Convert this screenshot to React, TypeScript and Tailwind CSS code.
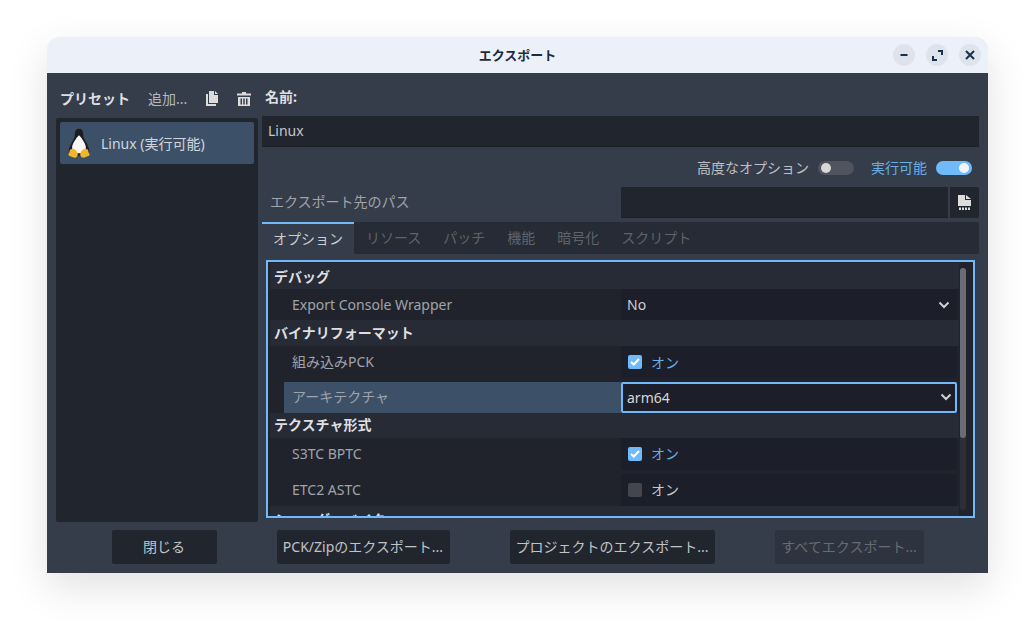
const font = { fontFamily: '"Noto Sans", "Noto Sans CJK JP", sans-serif' };

function Penguin() {
  return (
    <svg width="22" height="31" viewBox="0 0 24 32">
      <path d="M12 0c-3.500 0-4.600 3-4.600 6.500 0 3-1.400 5-3.400 8.500C2 18.500.8 22 .8 25.500L5 29h14l4.200-3.500c0-3.500-1.200-7-3.200-10.500-2-3.500-3.400-5.500-3.400-8.500C16.600 3 15.500 0 12 0z" fill="#1d1d1f" />
      <path d="M12 7l-2.800 3C8.400 12 4.500 16 4.500 20.500c0 3 2 6 7.500 6s7.500-3 7.500-6c0-4.500-3.900-8.500-4.700-10.500z" fill="#f7f7f7" />
      <path d="M5.500 21.500 8 23c1.500 1 3 3 2.600 5.500-.3 2-2.400 3.500-4.600 2.800L1.800 29.700C.5 29.200 0 28.300.8 27.300c.8-1.300.9-3 1.200-4 .3-1 2-1 3.500-1.800z" fill="#f3b52b" />
      <path d="M18.500 21.500 16 23c-1.500 1-3 3-2.600 5.500.3 2 2.400 3.500 4.600 2.800l4.200-1.600c1.300-.5 1.800-1.400 1-2.400-.8-1.300-.9-3-1.200-4-.3-1-2-1-3.500-1.800z" fill="#f3b52b" />
    </svg>
  );
}

function FileStack() {
  return (
    <svg width="13" height="15" viewBox="0 0 13 15" fill="#dcdcdc">
      <path d="M3 0h5v4h4v8H3z" />
      <path d="M9 0l3 3H9z" />
      <path d="M0 3h2v10h8v2H0z" />
    </svg>
  );
}

function Trash() {
  return (
    <svg width="14" height="14" viewBox="0 0 14 14" fill="#dcdcdc">
      <path d="M5 0h4v1.500h5v2H0v-2h5z" />
      <path d="M1 5h12v9H1zM3.500 6.500v6H5v-6zM6.250 6.500v6h1.500v-6zM9 6.500v6h1.500v-6z" fillRule="evenodd" />
    </svg>
  );
}

function FileDots() {
  return (
    <svg width="13" height="15" viewBox="0 0 13 15" fill="#dcdcdc">
      <path d="M0 0h7v5h6v6H0z" />
      <path d="M8 0l5 4H8z" />
      <path d="M1 12.500h2V15H1zM4 12.500h2V15H4zM7 12.500h2V15H7zM10 12.500h2V15h-2z" />
    </svg>
  );
}

function Chevron() {
  return (
    <svg width="12" height="8" viewBox="0 0 12 8" fill="none" stroke="#d0d0d0" strokeWidth="2">
      <path d="M1.500 1.500 6 6l4.500-4.500" />
    </svg>
  );
}

function Checkbox({ checked }: { checked: boolean }) {
  return (
    <span className="flex items-center gap-[9px] pl-[1px]">
      {checked ? (
        <span className="flex h-[14px] w-[14px] items-center justify-center rounded-[2px] bg-[#70bafa]">
          <svg width="10" height="8" viewBox="0 0 10 8" fill="none" stroke="#ffffff" strokeWidth="2">
            <path d="M1 4l2.800 2.500L9 1" />
          </svg>
        </span>
      ) : (
        <span className="h-[14px] w-[14px] rounded-[2px] bg-[#43464f]" />
      )}
      <span className={checked ? "text-[#66aee8]" : "text-[#c8c9cc]"}>オン</span>
    </span>
  );
}

function Toggle({ on }: { on: boolean }) {
  return on ? (
    <span className="flex h-[14px] w-[36px] items-center justify-end rounded-full bg-[#70bafa] pr-[3px]">
      <span className="h-[10px] w-[10px] rounded-full bg-[#f0f4f8]" />
    </span>
  ) : (
    <span className="flex h-[14px] w-[36px] items-center rounded-full bg-[#50545e] pl-[3px]">
      <span className="h-[10px] w-[10px] rounded-full bg-[#d8d8d8]" />
    </span>
  );
}

function SectionHead({ label, className }: { label: string; className: string }) {
  return (
    <div className={`ml-[2px] mr-[1px] flex items-center bg-[#272b35] pl-[4px] text-[14px] font-bold text-[#dedfe1] ${className}`}>
      {label}
    </div>
  );
}

function Row({ label, labelClass = "", valueClass = "", children }: { label: string; labelClass?: string; valueClass?: string; children: React.ReactNode }) {
  return (
    <div className="ml-[16px] flex h-[32px]">
      <div className={`flex w-[337px] items-center pl-[8px] text-[#a0a3a9] ${labelClass}`}>{label}</div>
      <div className={`flex w-[336px] items-center bg-[#1c1f29] px-[6px] text-[#cfcfd1] ${valueClass}`}>{children}</div>
    </div>
  );
}

function WindowButton({ children }: { children: React.ReactNode }) {
  return (
    <span className="flex h-[22px] w-[22px] items-center justify-center rounded-full bg-[#dfe3ec]">{children}</span>
  );
}

export default function App() {
  const tabs = ["リソース", "パッチ", "機能", "暗号化", "スクリプト"];

  return (
    <div className="h-[630px] w-[1035px] overflow-hidden bg-white pl-[47px] pt-[37px] text-[14px]" style={font}>
      <div className="flex h-[536px] w-[941px] flex-col overflow-hidden rounded-t-[12px] shadow-[0_14px_40px_rgba(0,0,0,0.12)]">
        <header className="relative flex h-[36px] shrink-0 items-center justify-center bg-[#ecf0f9] pt-[1px]">
          <span className="text-[13px] font-semibold text-[#1c2b3f]">エクスポート</span>
          <div className="absolute right-[7px] top-[7px] flex gap-[11px]">
            <WindowButton>
              <svg width="10" height="10" viewBox="0 0 10 10" fill="#17324f"><path d="M1.500 4h7v2h-7z" /></svg>
            </WindowButton>
            <WindowButton>
              <svg width="11" height="11" viewBox="0 0 11 11" fill="#17324f">
                <path d="M6 0h5v5H9V2H6zM0 6h2v3h3v2H0z" />
              </svg>
            </WindowButton>
            <WindowButton>
              <svg width="10" height="10" viewBox="0 0 10 10" stroke="#17324f" strokeWidth="2"><path d="M1 1l8 8M9 1 1 9" /></svg>
            </WindowButton>
          </div>
        </header>

        <div className="flex min-h-0 flex-1 flex-col bg-[#363d4a] px-[9px]">
          <div className="flex h-[457px] shrink-0 gap-[4px] pt-[13px]">
            <aside className="flex w-[202px] shrink-0 flex-col">
              <div className="flex h-[32px] items-end whitespace-nowrap pb-[9px] pl-[4px]">
                <span className="font-bold text-[#dedfe1]">プリセット</span>
                <span className="ml-[18px] w-[39px] text-[#b4b7bd]">追加...</span>
                <span className="mb-[3px] ml-[19px]"><FileStack /></span>
                <span className="mb-[3px] ml-[18px]"><Trash /></span>
              </div>
              <div className="mb-[1px] h-[404px] rounded-[2px] bg-[#21262e] p-[4px]">
                <div className="flex h-[42px] items-center gap-[11px] rounded-[2px] bg-[#3c5168] pl-[8px] text-[#d2d6dc]">
                  <Penguin />
                  <span>Linux (実行可能)</span>
                </div>
              </div>
            </aside>

            <main className="flex w-[717px] shrink-0 flex-col">
              <div className="flex h-[30px] items-end pb-[9px] pl-[3px] font-bold text-[#dedfe1]">名前:</div>
              <div className="flex h-[31px] items-center border-b border-[#1b1e25] bg-[#21262e] pb-[2px] pl-[6px] text-[#c2c5ca]">Linux</div>
              <div className="flex h-[40px] items-center justify-end gap-[9px] pr-[7px] pt-[1px]">
                <span className="text-[#bec0c4]">高度なオプション</span>
                <Toggle on={false} />
                <span className="ml-[8px] text-[#66aee8]">実行可能</span>
                <Toggle on />
              </div>
              <div className="flex h-[31px] items-center">
                <span className="w-[359px] pb-[2px] pl-[8px] text-[#a0a3a9]">エクスポート先のパス</span>
                <div className="h-full w-[327px] border-b border-[#1b1e25] bg-[#21262e]" />
                <div className="ml-[2px] flex h-full flex-1 items-center justify-center rounded-r-[2px] bg-[#21262e]">
                  <FileDots />
                </div>
              </div>

              <div className="mt-[4px] flex h-[32px] shrink-0 items-stretch rounded-[2px] bg-[#262b35]">
                <div className="flex w-[92px] items-center justify-center border-t-2 border-[#70bafa] bg-[#363d4a] pb-[2px] text-[#cacdd2]">オプション</div>
                <div className="flex items-center gap-[22px] pb-[1px] pl-[12px] text-[#5f636b]">
                  {tabs.map((tab) => (
                    <span key={tab}>{tab}</span>
                  ))}
                </div>
              </div>

              <div className="ml-[4px] mt-[6px] flex h-[258px] w-[709px] shrink-0 overflow-hidden border-2 border-[#70bafa] bg-[#20232c]">
                <div className="min-w-0 flex-1 overflow-hidden">
                  <div className="h-[1px]" />
                  <SectionHead label="デバッグ" className="h-[26px]" />
                  <div className="ml-[16px] flex h-[31px]">
                    <div className="flex w-[337px] items-center pl-[8px] text-[#a0a3a9]">Export Console Wrapper</div>
                    <div className="flex w-[336px] items-center justify-between bg-[#1c1f29] pl-[6px] pr-[7px] text-[#cfcfd1]">
                      <span>No</span>
                      <Chevron />
                    </div>
                  </div>
                  <SectionHead label="バイナリフォーマット" className="h-[26px] pb-[2px]" />
                  <Row label="組み込みPCK" labelClass="pb-[2px]">
                    <Checkbox checked />
                  </Row>
                  <div className="ml-[16px] mt-[4px] flex h-[31px]">
                    <div className="flex w-[337px] items-center bg-[#3c5168] pb-[2px] pl-[8px] text-[#a0a3a9]">アーキテクチャ</div>
                    <div className="flex w-[336px] items-center justify-between rounded-[2px] border-2 border-[#70bafa] bg-[#1c1f29] pb-[1px] pl-[4px] pr-[3px] text-[#d8d8d8]">
                      <span>arm64</span>
                      <Chevron />
                    </div>
                  </div>
                  <SectionHead label="テクスチャ形式" className="h-[25px] pb-[2px]" />
                  <Row label="S3TC BPTC" labelClass="pb-[2px]" valueClass="pb-[1px]">
                    <Checkbox checked />
                  </Row>
                  <div className="h-[4px]" />
                  <Row label="ETC2 ASTC" labelClass="pb-[2px]" valueClass="pb-[1px]">
                    <Checkbox checked={false} />
                  </Row>
                  <SectionHead label="シェーダーベイク" className="h-[26px]" />
                </div>
                <div className="mr-[7px] mt-[6px] flex h-[242px] w-[6px] shrink-0 flex-col rounded-full bg-[#2b2f38]">
                  <div className="h-[170px] w-full rounded-full bg-[#6a6d74]" />
                </div>
              </div>
            </main>
          </div>

          <footer className="flex flex-1 items-start justify-center gap-[60px]">
            <button className="h-[34px] w-[105px] rounded-[2px] bg-[#21262e] pb-[1px] text-[#c0c3c8]">閉じる</button>
            <button className="h-[34px] w-[173px] rounded-[2px] bg-[#21262e] pb-[1px] text-[#c0c3c8]">PCK/Zipのエクスポート...</button>
            <button className="h-[34px] w-[205px] rounded-[2px] bg-[#21262e] pb-[1px] text-[#c0c3c8]">プロジェクトのエクスポート...</button>
            <button className="h-[34px] w-[149px] rounded-[2px] bg-[#2e343f] pb-[1px] text-[#676b73]">すべてエクスポート...</button>
          </footer>
        </div>
      </div>
    </div>
  );
}
